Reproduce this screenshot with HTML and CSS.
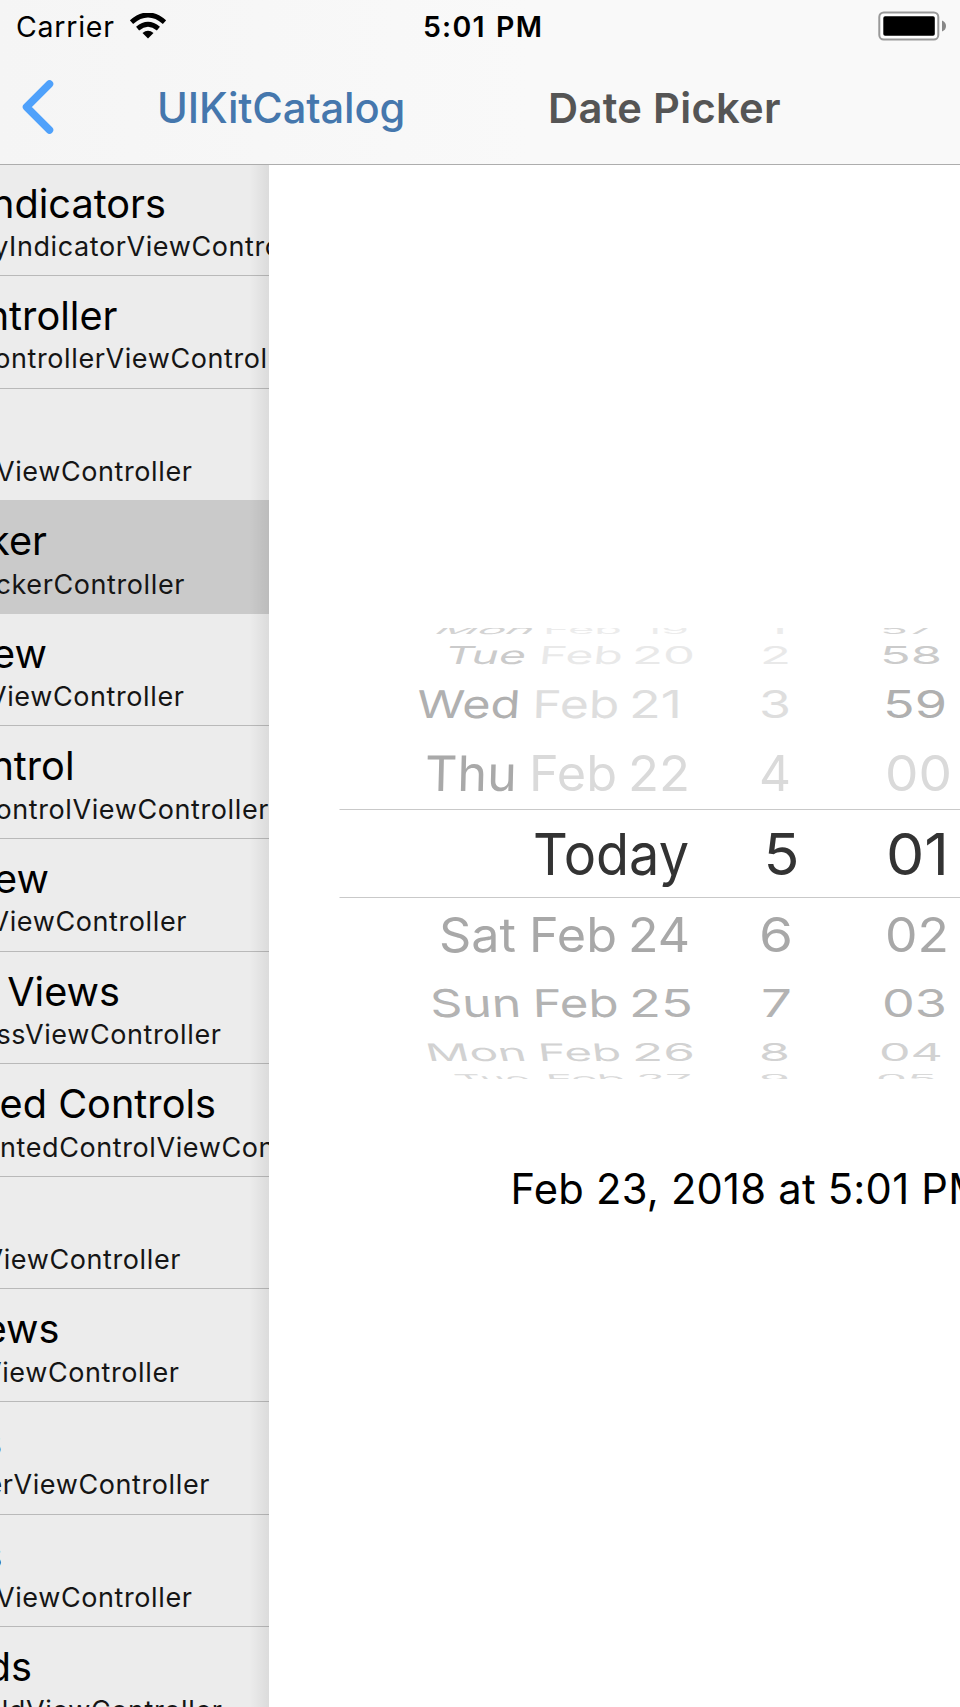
FILE: index.html
```
<!DOCTYPE html>
<html lang="en">
<head>
<meta charset="utf-8">
<title>Date Picker</title>
<link rel="stylesheet" href="styles.css">
</head>
<body>
<div class="screen">
  <header class="top">
    <div class="status">
      <div class="carrier"><span>Carrier</span>
        <svg class="wifi" viewBox="0 0 36 26" width="36" height="26"><g fill="none" stroke="#000"><path d="M1.5 9.2Q18-5.2 34.500 9.200" stroke-width="5"/><path d="M7.600 15.600Q18 7 28.400 15.600" stroke-width="4.800"/></g><path d="M12.500 20Q18 15.500 23.500 20L18 25.500Z"/></svg>
      </div>
      <div class="time">5:01 PM</div>
      <svg class="battery" viewBox="0 0 70 30" width="70" height="30"><rect x="1.300" y="1.500" width="59" height="27" rx="4.500" fill="#fff" stroke="#999" stroke-width="2"/><rect x="5.300" y="5.300" width="51.500" height="19.500" rx="1.800"/><path d="M64 9.500Q68 11 68 15T64 20.500Z" fill="#888"/></svg>
    </div>
    <nav class="nav">
      <svg class="back" viewBox="0 0 34 58" width="34" height="58"><path d="M29.500 6L6.500 29L29.500 52" fill="none" stroke="#4fa1fb" stroke-width="7.500" stroke-linecap="round" stroke-linejoin="round"/></svg>
      <span class="parent">UIKitCatalog</span>
      <h1 class="title">Date Picker</h1>
    </nav>
  </header>
  <main class="split">
    <ul class="list">
      <li class="row"><b class="t">ndicators</b><span class="s">yIndicatorViewController</span></li>
      <li class="row"><b class="t">ntroller</b><span class="s">ontrollerViewController</span></li>
      <li class="row"><b class="t"></b><span class="s">ViewController</span></li>
      <li class="row selected"><b class="t">ker</b><span class="s">ckerController</span></li>
      <li class="row"><b class="t">ew</b><span class="s">ViewController</span></li>
      <li class="row"><b class="t">ntrol</b><span class="s">ontrolViewController</span></li>
      <li class="row"><b class="t">ew</b><span class="s">ViewController</span></li>
      <li class="row"><b class="t">Views</b><span class="s">ssViewController</span></li>
      <li class="row"><b class="t">ed Controls</b><span class="s">ntedControlViewController</span></li>
      <li class="row"><b class="t"></b><span class="s">ViewController</span></li>
      <li class="row"><b class="t">ews</b><span class="s">ViewController</span></li>
      <li class="row"><b class="t">s</b><span class="s">erViewController</span></li>
      <li class="row"><b class="t">s</b><span class="s">ViewController</span></li>
      <li class="row"><b class="t">ds</b><span class="s">ldViewController</span></li>
    </ul>
    <section class="detail">
      <svg class="wheel" viewBox="339 620 621 470" width="621" height="470">
        <defs><clipPath id="drum"><rect x="339" y="628" width="621" height="451"/></clipPath></defs>
        <g clip-path="url(#drum)">
          <g class="r far" transform="translate(0 633.500) scale(1 .2)"><text x="432" textLength="98" class="day" transform="skewX(-14)">Mon</text><text x="543" textLength="79">Feb</text><text x="643" textLength="46">19</text><text x="764" textLength="24">1</text><text class="day" x="880" textLength="54">57</text></g>
          <g class="r mid" transform="translate(0 664) scale(1 .425)"><text x="443" textLength="81" class="day" transform="skewX(-7)">Tue</text><text x="538" textLength="84" transform="skewX(-3)">Feb</text><text x="632" textLength="63">20</text><text x="760" textLength="31">2</text><text class="day" x="880" textLength="62">58</text></g>
          <g class="r near" transform="translate(0 718) scale(1 .66)"><text x="416" textLength="103.500" class="day" transform="skewX(-2.500)">Wed</text><text x="532" textLength="87" transform="skewX(-1)">Feb</text><text x="629" textLength="53">21</text><text x="759" textLength="32">3</text><text class="day" x="883" textLength="64">59</text></g>
          <g class="r next" transform="translate(0 791) scale(1 .84)"><text x="424.500" textLength="92" class="day" transform="skewX(-1.200)">Thu</text><text x="529" textLength="88">Feb</text><text x="628" textLength="62">22</text><text x="759" textLength="32">4</text><text x="885" textLength="67">00</text></g>
          <g class="r now" transform="translate(0 875.300)"><text x="533" textLength="156">Today</text><text x="763.500" textLength="36">5</text><text x="886" textLength="63">01</text></g>
          <g class="r b1" transform="translate(0 951.600) scale(1 .82)"><text x="439" textLength="77">Sat</text><text x="529" textLength="88">Feb</text><text x="628" textLength="62">24</text><text x="759" textLength="34">6</text><text x="885" textLength="64">02</text></g>
          <g class="r b2" transform="translate(0 1017) scale(1 .66)"><text x="431" textLength="91" transform="skewX(2.500)">Sun</text><text x="533" textLength="86" transform="skewX(1)">Feb</text><text x="629" textLength="64">25</text><text x="761" textLength="31">7</text><text x="882" textLength="65">03</text></g>
          <g class="r b3" transform="translate(0 1060.700) scale(1 .415)"><text x="428" textLength="100" transform="skewX(6)">Mon</text><text x="539" textLength="83" transform="skewX(3)">Feb</text><text x="632" textLength="63">26</text><text x="759" textLength="31">8</text><text x="879" textLength="64">04</text></g>
          <g class="r b4" transform="translate(0 1082.500) scale(1 .21)"><text x="461" textLength="73" transform="skewX(12)">Tue</text><text x="547" textLength="79" transform="skewX(3)">Feb</text><text x="636" textLength="56">27</text><text x="759" textLength="31">9</text><text x="876" textLength="61">05</text></g>
        </g>
        <path d="M339.500 809.500H960M339.500 897.500H960" stroke="#c9c9c9"/>
      </svg>
      <p class="stamp">Feb 23, 2018 at 5:01 PM</p>
    </section>
  </main>
</div>
<script src="fit.js"></script>
</body>
</html>
```
FILE: fit.js
```
// Stretch the glyphs of each wheel label together with its spacing.
document.querySelectorAll('.wheel text').forEach(function (t) {
  t.setAttribute('lengthAdjust', 'spacingAndGlyphs');
});
```
FILE: styles.css
```
* { box-sizing: border-box; }
body { margin: 0; background: #fff; font-family: Inter, "Liberation Sans", sans-serif; color: #000; }
.screen { width: 960px; height: 1707px; overflow: hidden; display: flex; flex-direction: column; }
.top { height: 165px; flex: none; border-bottom: 1px solid #adadad; background: linear-gradient(90deg, #f5f5f5, #f9f9f9 55%); }
.status { height: 53px; display: grid; grid-template-columns: 423px 1fr 82px; align-items: start; font-size: 28.500px; line-height: 36px; padding-top: 9px; }
.carrier { display: flex; padding-left: 16px; gap: 15px; letter-spacing: .75px; }
.wifi { margin-top: 4px; }
.time { font-weight: 600; white-space: nowrap; word-spacing: 2px; letter-spacing: 1.2px; }
.battery { margin-top: 2px; }
.nav { display: grid; grid-template-columns: 157px 391px 1fr; align-items: start; font-size: 41.700px; line-height: 50px; padding-top: 30px; }
.back { margin: -5px 0 0 20px; }
.parent { font-weight: 500; color: #4577ad; letter-spacing: -.15px; }
.title { margin: 0; font-size: inherit; font-weight: 600; color: #555; letter-spacing: .3px; }
.split { flex: 1; min-height: 0; display: grid; grid-template-columns: 269px 1fr; }
.list { margin: -1.600px 0 0; padding: 0; list-style: none; position: relative; z-index: 0; overflow: hidden; background: #ececec; display: grid; grid-auto-rows: 112.600px; height: 1545px; clip-path: inset(1.600px 0 0 0); }
.list::after { content: ""; position: absolute; right: 0; top: 0; bottom: 0; width: 20px; background: linear-gradient(90deg, rgba(0,0,0,0), rgba(0,0,0,.07)); }
.row { border-bottom: 1px solid #b9b9b9; padding-top: 16.100px; min-width: 0; }
.row.selected { background: #cacaca; border-color: #cacaca; }
.row:nth-child(3) { border-color: #cacaca; }
.t, .s { display: flex; justify-content: flex-end; white-space: nowrap; }
.t { height: 48px; font-weight: 400; font-size: 39.700px; line-height: 48px; width: var(--t); }
.s { height: 36px; margin-top: 1.300px; font-size: 27px; line-height: 36px; letter-spacing: .6px; color: #151515; width: var(--s); }
.row:nth-child(1) { --t: 166px; --s: 323px; }
.row:nth-child(2) { --t: 117.500px; --s: 302px; }
.row:nth-child(3) { --t: 0px; --s: 192.500px; }
.row:nth-child(4) { --t: 47px; --s: 185px; }
.row:nth-child(5) { --t: 47px; --s: 184.500px; }
.row:nth-child(6) { --t: 74.500px; --s: 269px; }
.row:nth-child(7) { --t: 49px; --s: 187px; }
.row:nth-child(8) { --t: 120px; --s: 221.500px; }
.row:nth-child(9) { --t: 216px; --s: 353px; }
.row:nth-child(10) { --t: 0px; --s: 181px; }
.row:nth-child(11) { --t: 59.500px; --s: 179.500px; }
.row:nth-child(12) { --t: 2.200px; --s: 210px; }
.row:nth-child(13) { --t: 2.500px; --s: 192.500px; }
.row:nth-child(14) { --t: 32px; --s: 222.500px; }
.detail { min-width: 0; overflow: hidden; padding: 455px 0 0 70px; }
.wheel { display: block; }
.r { font-size: 58px; }
.far { fill: #ececec; } .far .day { fill: #d3d3d3; }
.mid { fill: #e9e9e9; } .mid .day { fill: #cbcbcb; }
.near { fill: #dedede; } .near .day { fill: #b0b0b0; }
.next { fill: #dadada; } .next .day { fill: #a9a9a9; }
.now { fill: #333; }
.b1 { fill: #a8a8a8; } .b2 { fill: #b3b3b3; } .b3 { fill: #d2d2d2; } .b4 { fill: #d9d9d9; }
.stamp { margin: 74px 0 0 171.500px; font-size: 41.700px; line-height: 50px; letter-spacing: .24px; white-space: nowrap; }
```
